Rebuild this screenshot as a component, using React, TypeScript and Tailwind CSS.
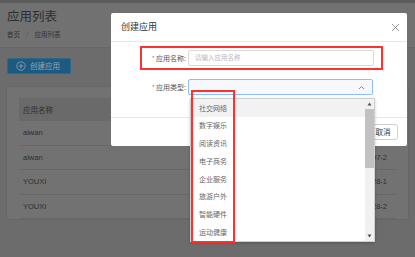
import React from "react";

const cjk = { fontFamily: '"Noto Sans CJK SC", "Noto Sans", sans-serif' };

const rows = [
  { name: "aiwan", val: "" },
  { name: "aiwan", val: "2018-05-07-2" },
  { name: "YOUXI", val: "2018-05-28-1" },
  { name: "YOUXI", val: "2018-05-28-2" },
];

const options = ["社交网络", "数字娱乐", "阅读资讯", "电子商务", "企业服务", "旅游户外", "智能硬件", "运动健康"];

export default function App() {
  return (
    <div className="relative w-[415px] h-[257px] overflow-hidden bg-[#6c6c6c]" style={cjk}>
      {/* underlying page (already dimmed by mask) */}
      <div className="h-[3px] bg-[#5c5c5c]" />
      <div className="h-[45px] bg-[#717171] border-b border-[#686868] pl-[7px] pt-[4px]">
        <div className="text-[12.5px] leading-[18px] text-[#2e2e2e]">应用列表</div>
        <div className="mt-[5px] text-[6.5px] leading-[9px] text-[#333] flex gap-[6px]">
          <span>首页</span>
          <span className="text-[#555]">/</span>
          <span>应用列表</span>
        </div>
      </div>
      <div className="px-[7px] pt-[10px]">
        <div className="w-[64px] h-[16px] bg-[#1e5a80] border border-[#2a6890] rounded-[2px] flex items-center pl-[8px] gap-[4px] text-[7.5px] text-[#8fa7b7]">
          <svg width="10" height="10" viewBox="0 0 10 10" fill="none" stroke="#8fa7b7" strokeWidth="0.8">
            <circle cx="5" cy="5" r="4.2" />
            <path d="M5 2.8v4.4M2.8 5h4.4" />
          </svg>
          <span>创建应用</span>
        </div>
        <div className="mt-[13px] w-[401px] h-[132px] bg-[#727272] pt-[11px] px-[12px] shadow-[0_0_2px_rgba(0,0,0,0.15)]">
          <div className="h-[23px] bg-[#6a6a6a] flex items-center px-[4px] text-[7.5px] text-[#2e2e2e]">
            <span className="flex-1">应用名称</span>
          </div>
          {rows.map((r, i) => (
            <div
              key={i}
              className="h-[24.5px] border-b border-[#686868] flex items-center pl-[4px] pr-[9px] text-[7.5px] text-[#2e2e2e]"
              style={{ fontFamily: '"Liberation Sans", "Noto Sans CJK SC", sans-serif' }}
            >
              <span className="flex-1">{r.name}</span>
              {r.val && <span>{r.val}</span>}
            </div>
          ))}
        </div>
      </div>

      {/* modal */}
      <div className="absolute left-[111px] top-[13px] w-[296px] h-[133px] bg-white rounded-[2px] flex flex-col">
        <div className="h-[29px] border-b border-[#e8e8e8] flex items-center justify-between pl-[10px] pr-[7px]">
          <span className="text-[9px] text-[#333]">创建应用</span>
          <svg width="9" height="9" viewBox="0 0 9 9" stroke="#8a8a8a" strokeWidth="0.9">
            <path d="M1 1l7 7M8 1L1 8" />
          </svg>
        </div>
        <div className="flex-1 pt-[4px] pl-[29px]">
          <div className="w-[243px] h-[24px] border-2 border-[#ff3030] flex items-center">
            <div className="w-[46px] text-right pr-[2px] text-[7px] text-[#555]">
              <span className="text-[#f56c6c] mr-[1px]">*</span>应用名称:
            </div>
            <div className="w-[186px] h-[16px] border border-[#d9d9d9] rounded-[2px] flex items-center pl-[6px] text-[6.5px] text-[#b8b8b8]">
              请输入应用名称
            </div>
          </div>
          <div className="mt-[9px] pl-[2px] flex items-center">
            <div className="w-[46px] text-right pr-[2px] text-[7px] text-[#555]">
              <span className="text-[#f56c6c] mr-[1px]">*</span>应用类型:
            </div>
            <div className="w-[185px] h-[16px] border border-[#8fc0ec] bg-[#f6f8fb] rounded-[2px] flex items-center justify-end pr-[7px]">
              <svg width="7" height="5" viewBox="0 0 7 5" fill="none" stroke="#888" strokeWidth="1">
                <path d="M1 4l2.5-2.5L6 4" />
              </svg>
            </div>
          </div>
        </div>
        <div className="h-[29px] border-t border-[#e8e8e8] flex items-center justify-end pr-[9px]">
          <div className="w-[30px] h-[16px] border border-[#cfcfcf] rounded-[3px] text-[7.5px] text-[#333] flex items-center justify-center">取消</div>
        </div>
      </div>

      {/* dropdown */}
      <div className="absolute left-[190px] top-[98px] w-[185px] h-[144px] bg-white border border-[#cfcfcf] shadow-[0_1px_3px_rgba(0,0,0,0.2)] flex">
        <div className="flex-1 flex flex-col">
          {options.map((o, i) => (
            <div
              key={o}
              className={`h-[18.3px] flex items-center pl-[8px] text-[7px] text-[#666] ${i === 0 ? "bg-[#f2f2f2]" : ""}`}
            >
              {o}
            </div>
          ))}
        </div>
        <div className="w-[9px] bg-[#f1f1f1] flex flex-col items-center">
          <svg className="mt-[3px]" width="5" height="4" viewBox="0 0 5 4">
            <path d="M0.5 3.5L2.5 0.5L4.5 3.5Z" fill="#505050" />
          </svg>
          <div className="mt-[3px] w-[9px] h-[59px] bg-[#c1c1c1]" />
          <div className="flex-1" />
          <svg className="mb-[3px]" width="5" height="4" viewBox="0 0 5 4">
            <path d="M0.5 0.5L2.5 3.5L4.5 0.5Z" fill="#505050" />
          </svg>
        </div>
      </div>

      {/* red annotation box around options */}
      <div className="absolute left-[191px] top-[90px] w-[44px] h-[153px] border-2 border-[#ff3030]" />
    </div>
  );
}
